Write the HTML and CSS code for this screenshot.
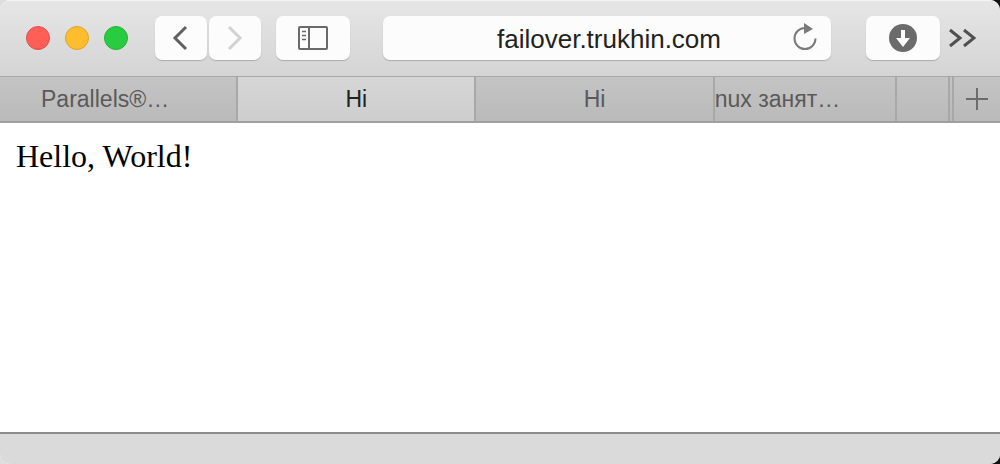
FILE: index.html
```html
<!DOCTYPE html>
<html lang="en">
<head>
    <meta charset="UTF-8">
    <meta name="viewport" content="width=device-width, initial-scale=1.0">
    <title>Hi</title>
    <link rel="stylesheet" href="styles.css">
</head>
<body>
    <div class="window">
        <header class="toolbar">
            <div class="lights">
                <button class="light close" aria-label="Close"></button>
                <button class="light minimize" aria-label="Minimize"></button>
                <button class="light maximize" aria-label="Zoom"></button>
            </div>

            <div class="nav">
                <button class="tool" aria-label="Back">
                    <svg width="24" height="28" viewBox="0 0 24 28"><path d="M17 3 L6 14 L17 25" fill="none" stroke="#606060" stroke-width="3"/></svg>
                </button>
                <button class="tool" aria-label="Forward" disabled>
                    <svg width="24" height="28" viewBox="0 0 24 28"><path d="M6 3 L17 14 L6 25" fill="none" stroke="#d2d2d2" stroke-width="3"/></svg>
                </button>
            </div>

            <button class="tool wide" aria-label="Show sidebar">
                <svg width="30" height="24" viewBox="0 0 30 24" fill="none" stroke="#6a6a6a">
                    <rect x="1" y="1" width="28" height="22" rx="1" stroke-width="2"/>
                    <path d="M11 1 V23" stroke-width="2"/>
                    <path d="M4 5.5 H8 M4 9.5 H8 M4 13.5 H8" stroke-width="1.5"/>
                </svg>
            </button>

            <form class="address">
                <input type="text" value="failover.trukhin.com" aria-label="Address">
                <button type="button" class="reload" aria-label="Reload">
                    <svg width="24" height="28" viewBox="0 0 24 28">
                        <path d="M12 5 A10.5 10.5 0 1 0 22.5 15.5" fill="none" stroke="#7a7a7a" stroke-width="2"/>
                        <path d="M11 0 L20 6 L11 11 Z" fill="#7a7a7a"/>
                    </svg>
                </button>
            </form>

            <button class="tool wide" aria-label="Downloads">
                <svg width="28" height="28" viewBox="0 0 28 28">
                    <circle cx="14" cy="14" r="14" fill="#6b6b6b"/>
                    <path d="M12 6 H16 V14 H21 L14 23 L7 14 H12 Z" fill="#fff"/>
                </svg>
            </button>
            <button class="more" aria-label="More">
                <svg width="28" height="20" viewBox="0 0 28 20"><path d="M2 2 L12 10 L2 18 M16 2 L26 10 L16 18" fill="none" stroke="#505050" stroke-width="3"/></svg>
            </button>
        </header>

        <nav class="tabs">
            <a href="#" class="tab"><span class="shifted">Parallels®…</span></a>
            <a href="#" class="tab active">Hi</a>
            <a href="#" class="tab">Hi</a>
            <a href="#" class="tab cut">nux занят…</a>
            <a href="#" class="tab small" aria-label="Tab"></a>
            <a href="#" class="tab sliver" aria-label="Tab"></a>
            <button class="new-tab" aria-label="New tab">
                <svg width="22" height="22" viewBox="0 0 22 22"><path d="M11 0 V22 M0 11 H22" stroke="#6c6c6c" stroke-width="2"/></svg>
            </button>
        </nav>

        <main class="page">Hello, World!</main>

        <footer class="status"></footer>
    </div>
</body>
</html>
```

FILE: styles.css
```css
* {
    box-sizing: border-box;
}

body {
    margin: 0;
    background: linear-gradient(to right, #ddd 50%, #111 50%);
    font-family: "Liberation Sans", Arial, sans-serif;
}

button {
    border: none;
    padding: 0;
    background: none;
}

svg {
    display: block;
}

.window {
    display: flex;
    flex-direction: column;
    min-height: 100vh;
    background: #fff;
    border-radius: 10px;
    overflow: hidden;
}

/* Toolbar */
.toolbar {
    display: flex;
    align-items: flex-start;
    height: 76px;
    padding: 15px 24px 0 26px;
    background: linear-gradient(#e6e6e6, #d4d4d4);
    border-top: 1px solid #f4f4f4;
}

.lights {
    display: flex;
    align-items: center;
    gap: 15px;
    height: 44px;
    margin-right: 27px;
}

.light {
    width: 24px;
    height: 24px;
    border-radius: 50%;
    border: 1px solid;
}

.close {
    background: #ff5f57;
    border-color: #e2504a;
}

.minimize {
    background: #fdbd2e;
    border-color: #e0a32a;
}

.maximize {
    background: #27cc41;
    border-color: #20b236;
}

.nav {
    display: flex;
    gap: 2px;
    margin-right: 15px;
}

.tool {
    display: flex;
    align-items: center;
    justify-content: center;
    width: 52px;
    height: 44px;
    border-radius: 7px;
    background: #fcfcfc;
    box-shadow: 0 1px 1px rgba(0, 0, 0, 0.2);
}

.wide {
    width: 74px;
}

.address {
    position: relative;
    flex: 1;
    margin: 0 35px 0 33px;
}

.address input {
    display: block;
    width: 100%;
    height: 44px;
    padding: 2px 0 0 4px;
    border: none;
    border-radius: 7px;
    background: #fcfcfc;
    box-shadow: 0 1px 1px rgba(0, 0, 0, 0.2);
    color: #222;
    font: 26px "Liberation Sans", Arial, sans-serif;
    text-align: center;
}

/* sits over the right end of the address field */
.reload {
    position: absolute;
    top: 7px;
    right: 14px;
}

.more {
    display: flex;
    align-items: center;
    height: 44px;
    margin-left: 8px;
}

/* Tabs */
.tabs {
    display: flex;
    height: 47px;
    border-top: 1px solid #a8a8a8;
    border-bottom: 2px solid #a0a0a0;
    background: linear-gradient(#c4c4c4, #bababa);
}

.tab {
    display: flex;
    flex: 239;
    align-items: center;
    justify-content: center;
    min-width: 0;
    border-right: 2px solid #a8a8a8;
    color: #5a5a5a;
    font-size: 23px;
    text-decoration: none;
    white-space: nowrap;
    overflow: hidden;
}

.shifted {
    padding-right: 26px;
}

.active {
    background: linear-gradient(#d6d6d6, #cecece);
    color: #222;
}

.cut {
    flex: 182;
    justify-content: flex-start;
}

.small {
    flex: 52;
}

.sliver {
    flex: 0 0 4px;
}

.new-tab {
    display: flex;
    align-items: center;
    justify-content: center;
    width: 46px;
}

/* Page */
.page {
    flex: 1;
    padding: 15px 16px;
    font: 32px "Liberation Serif", "Times New Roman", serif;
}

.status {
    height: 32px;
    border-top: 2px solid #8c8c8c;
    background: #dadada;
}
```
